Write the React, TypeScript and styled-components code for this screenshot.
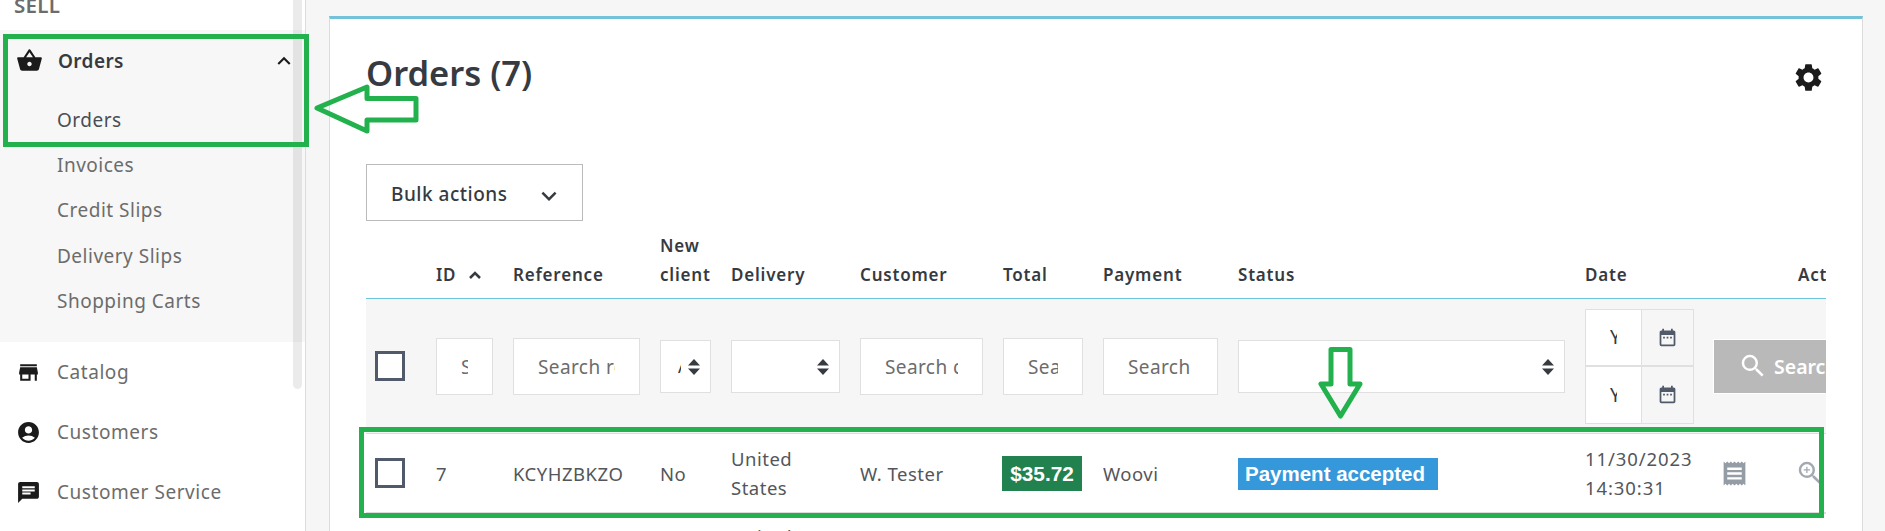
import React from "react";
import styled, { createGlobalStyle } from "styled-components";
import {
  MdAccountCircle,
  MdChat,
  MdDateRange,
  MdExpandLess,
  MdExpandMore,
  MdReceipt,
  MdSearch,
  MdSettings,
  MdShoppingBasket,
  MdStore,
  MdZoomIn,
} from "react-icons/md";

const Global = createGlobalStyle`
  html, body { margin: 0; padding: 0; height: 531px; overflow: hidden; background: #f6f6f6; }
  body { font-family: "Noto Sans", "Liberation Sans", sans-serif; color: #363a41; }
  * { box-sizing: border-box; }
`;

const Page = styled.div`
  position: relative;
  display: flex;
  width: 1885px;
  height: 531px;
  overflow: hidden;
`;

const Sidebar = styled.nav`
  position: relative;
  flex: 0 0 306px;
  height: 531px;
  background: #fff;
  border-right: 1px solid #dcdcdc;
  overflow: hidden;
`;

const ScrollThumb = styled.div`
  position: absolute;
  top: 0;
  left: 293px;
  width: 9px;
  height: 389px;
  border-radius: 0 0 5px 5px;
  background: rgba(0, 0, 0, 0.08);
`;

const SectionTitle = styled.div`
  height: 30px;
  margin-top: -6px;
  margin-bottom: 6px;
  padding-left: 14px;
  line-height: 22px;
  font-size: 20.5px;
  font-weight: 600;
  letter-spacing: 0.3px;
  color: #6c6c6c;
`;

const ActiveGroup = styled.div`
  background: #f7f7f7;
  padding-bottom: 18px;
`;

const GroupHeader = styled.div`
  display: flex;
  align-items: center;
  height: 67.5px;
  padding: 0 8px 6px 16px;
  font-size: 19px;
  font-weight: 600;
  letter-spacing: 0.4px;
  color: #363a41;
  svg:first-child { color: #1b1b1b; margin-right: 15px; }
  svg:last-child { margin-left: auto; color: #1b1b1b; }
`;

const SubItem = styled.div<{ $dark?: boolean }>`
  height: 45.4px;
  line-height: 45.4px;
  padding-left: 57px;
  font-size: 19px;
  letter-spacing: 0.5px;
  color: ${(p) => (p.$dark ? "#4a4d52" : "#6c6c6c")};
`;

const MainItem = styled.div`
  display: flex;
  align-items: center;
  height: 60px;
  padding-left: 16px;
  font-size: 19px;
  letter-spacing: 0.55px;
  color: #6c6c6c;
  svg { color: #1b1b1b; margin-right: 16px; flex: none; }
`;

const Main = styled.main`
  flex: 1;
  padding: 16px 22px 0 23px;
`;

const Card = styled.section`
  background: #fff;
  border-top: 3px solid #73c2d9;
  border-left: 1px solid #dcdcdc;
  border-right: 1px solid #dcdcdc;
  padding: 34px 35px 0 36px;
  height: 600px;
`;

const TitleRow = styled.div`
  display: flex;
  align-items: center;
  justify-content: space-between;
  height: 40px;
  margin-bottom: 71px;
  svg { color: #1b1b1b; margin: 9px 2px 0 0; }
`;

const Title = styled.h1`
  margin: 0;
  font-size: 34.5px;
  line-height: 40px;
  font-weight: 600;
  color: #363a41;
`;

const BulkButton = styled.button`
  display: flex;
  align-items: center;
  justify-content: space-between;
  width: 217px;
  height: 57px;
  padding: 2px 18px 0 24px;
  border: 1px solid #bbbbbb;
  background: #fff;
  font: 500 19px "Noto Sans", sans-serif;
  letter-spacing: 0.5px;
  color: #363a41;
  svg { margin-top: 4px; }
`;

const TableClip = styled.div`
  width: 1460px;
  overflow: hidden;
`;

const Table = styled.table`
  table-layout: fixed;
  width: 1547px;
  border-collapse: separate;
  border-spacing: 0;
  tbody tr:last-child td { height: 76px; }
`;

const Th = styled.th`
  height: 78px;
  padding: 0 0 9.5px 10px;
  vertical-align: bottom;
  text-align: left;
  border-bottom: 1px solid #6ec6dc;
  font-size: 17px;
  line-height: 29px;
  font-weight: 600;
  letter-spacing: 0.8px;
  color: #363a41;
  white-space: nowrap;
`;

const ActionsTh = styled(Th)`
  padding-left: 95px;
`;

const SortArrow = styled.svg`
  margin-left: 13px;
  vertical-align: 2px;
`;

const FilterCell = styled.td`
  height: 134px;
  padding: 0 10px;
  background: #f6f6f6;
  vertical-align: middle;
  white-space: nowrap;
`;

const SelectCell = styled(FilterCell)`
  padding-left: 9px;
`;

const SearchInput = styled.input`
  display: block;
  width: 100%;
  height: 57px;
  padding: 1px 24px 0;
  border: 1px solid #e0e0e0;
  background: #fff;
  font: 400 19px "Noto Sans", sans-serif;
  letter-spacing: 0.4px;
  outline: none;
  &::placeholder { color: #6c6c6c; opacity: 1; }
`;

const SelectWrap = styled.div`
  position: relative;
  height: 53px;
  svg { position: absolute; top: 19px; right: 11px; pointer-events: none; }
`;

const Select = styled.select`
  display: block;
  width: 100%;
  height: 100%;
  appearance: none;
  padding: 0 29px 0 17px;
  border: 1px solid #e0e0e0;
  border-radius: 0;
  background: #fff;
  font: 400 19px "Noto Sans", sans-serif;
  color: #363a41;
  outline: none;
`;

const Box = styled.span`
  display: block;
  width: 30px;
  height: 30px;
  border: 3px solid #505a6b;
  background: #fff;
`;

const DateGroup = styled.div`
  display: grid;
  grid-template-columns: 57px 52px;
  grid-auto-rows: 57.5px;
  width: 109px;
`;

const DateInput = styled.input`
  min-width: 0;
  width: 100%;
  height: 100%;
  padding: 0 24px;
  border: 1px solid #e0e0e0;
  background: #fff;
  font: 400 19px "Noto Sans", sans-serif;
  outline: none;
  &::placeholder { color: #363a41; opacity: 1; }
`;

const DateAddon = styled.div`
  display: flex;
  align-items: center;
  justify-content: center;
  border: 1px solid #e0e0e0;
  border-left: 0;
  background: #f6f6f6;
  color: #505a6b;
`;

const SearchButton = styled.button`
  display: flex;
  align-items: center;
  gap: 6px;
  width: 140px;
  height: 55px;
  padding: 0 0 0 24px;
  border: 1px solid #fff;
  background: #b9b9b9;
  color: #fff;
  font: 600 19.5px "Noto Sans", sans-serif;
`;

const Td = styled.td`
  height: 80px;
  padding: 0 0 0 10px;
  border-top: 1px solid #dcdcdc;
  border-bottom: 1px solid #dcdcdc;
  background: #fff;
  vertical-align: middle;
  font-size: 18.5px;
  letter-spacing: 0.5px;
  line-height: 29px;
  color: #53565b;
`;

const CheckTd = styled(Td)`
  padding-left: 9px;
`;

const DateTd = styled(Td)`
  letter-spacing: 0.9px;
`;

const TotalBadge = styled.span`
  display: inline-block;
  width: 80px;
  height: 35px;
  margin-left: -1px;
  text-align: center;
  background: #22824f;
  color: #fff;
  letter-spacing: 0;
  font: 700 20.8px/35px "Liberation Sans", Arial, sans-serif;
  vertical-align: middle;
`;

const StatusBadge = styled.span`
  display: inline-block;
  height: 32px;
  padding: 0 13px 0 7px;
  background: #3498db;
  color: #fff;
  letter-spacing: 0;
  font: 700 20.5px/32px "Liberation Sans", Arial, sans-serif;
  vertical-align: middle;
`;

const ActionCell = styled.div`
  display: flex;
  align-items: center;
  gap: 46px;
  padding-left: 7px;
  color: #949ca6;
  svg:last-child { color: #a2a9b2; }
`;

const GreenBox = styled.div<{ $x: number; $y: number; $w: number; $h: number }>`
  position: absolute;
  left: ${(p) => p.$x}px;
  top: ${(p) => p.$y}px;
  width: ${(p) => p.$w}px;
  height: ${(p) => p.$h}px;
  border: 5px solid #22b14c;
  pointer-events: none;
`;

const Overlay = styled.svg`
  position: absolute;
  inset: 0;
  pointer-events: none;
`;

const Updown = () => (
  <svg width="12" height="16" viewBox="0 0 12 16">
    <path d="M6 0 12 6.5H0zM6 16 0 9.500h12z" fill="#363a41" />
  </svg>
);

const rows = [
  { id: "7", ref: "KCYHZBKZO", customer: "W. Tester" },
  { id: "6", ref: "FFATNOMMJ", customer: "W. Tester" },
];

const columnWidths = [60, 77, 147, 71, 129, 143, 100, 135, 347, 128, 210];

export default function App() {
  return (
    <Page>
      <Global />
      <Sidebar>
        <SectionTitle>SELL</SectionTitle>
        <ActiveGroup>
          <GroupHeader>
            <MdShoppingBasket size={27} />
            Orders
            <MdExpandLess size={26} />
          </GroupHeader>
          <SubItem $dark>Orders</SubItem>
          <SubItem>Invoices</SubItem>
          <SubItem>Credit Slips</SubItem>
          <SubItem>Delivery Slips</SubItem>
          <SubItem>Shopping Carts</SubItem>
        </ActiveGroup>
        <MainItem><MdStore size={25} />Catalog</MainItem>
        <MainItem><MdAccountCircle size={25} />Customers</MainItem>
        <MainItem><MdChat size={25} />Customer Service</MainItem>
        <ScrollThumb />
      </Sidebar>
      <Main>
        <Card>
          <TitleRow>
            <Title>Orders (7)</Title>
            <MdSettings size={33} />
          </TitleRow>
          <BulkButton>
            Bulk actions
            <MdExpandMore size={30} />
          </BulkButton>
          <TableClip>
            <Table>
              <colgroup>
                {columnWidths.map((w, i) => (
                  <col key={i} style={{ width: w }} />
                ))}
              </colgroup>
              <thead>
                <tr>
                  <Th />
                  <Th>
                    ID
                    <SortArrow width="12" height="8" viewBox="0 0 12 8">
                      <path d="M1 7 6 2l5 5" fill="none" stroke="#363a41" strokeWidth="2.600" />
                    </SortArrow>
                  </Th>
                  <Th>Reference</Th>
                  <Th>New<br />client</Th>
                  <Th>Delivery</Th>
                  <Th>Customer</Th>
                  <Th>Total</Th>
                  <Th>Payment</Th>
                  <Th>Status</Th>
                  <Th>Date</Th>
                  <ActionsTh>Actions</ActionsTh>
                </tr>
              </thead>
              <tbody>
                <tr>
                  <SelectCell><Box /></SelectCell>
                  <FilterCell><SearchInput placeholder="Search ID" /></FilterCell>
                  <FilterCell><SearchInput placeholder="Search reference" /></FilterCell>
                  <FilterCell>
                    <SelectWrap>
                      <Select defaultValue="All"><option>All</option></Select>
                      <Updown />
                    </SelectWrap>
                  </FilterCell>
                  <FilterCell>
                    <SelectWrap>
                      <Select><option></option></Select>
                      <Updown />
                    </SelectWrap>
                  </FilterCell>
                  <FilterCell><SearchInput placeholder="Search customer" /></FilterCell>
                  <FilterCell><SearchInput placeholder="Search total" /></FilterCell>
                  <FilterCell><SearchInput placeholder="Search" /></FilterCell>
                  <FilterCell>
                    <SelectWrap>
                      <Select><option></option></Select>
                      <Updown />
                    </SelectWrap>
                  </FilterCell>
                  <FilterCell>
                    <DateGroup>
                      <DateInput placeholder="YYYY" />
                      <DateAddon><MdDateRange size={21} /></DateAddon>
                      <DateInput placeholder="YYYY" />
                      <DateAddon><MdDateRange size={21} /></DateAddon>
                    </DateGroup>
                  </FilterCell>
                  <FilterCell>
                    <SearchButton><MdSearch size={30} />Search</SearchButton>
                  </FilterCell>
                </tr>
                {rows.map((r) => (
                  <tr key={r.id}>
                    <CheckTd><Box /></CheckTd>
                    <Td>{r.id}</Td>
                    <Td>{r.ref}</Td>
                    <Td>No</Td>
                    <Td>United<br />States</Td>
                    <Td>{r.customer}</Td>
                    <Td><TotalBadge>$35.72</TotalBadge></Td>
                    <Td>Woovi</Td>
                    <Td><StatusBadge>Payment accepted</StatusBadge></Td>
                    <DateTd>11/30/2023<br />14:30:31</DateTd>
                    <Td>
                      <ActionCell>
                        <MdReceipt size={29} />
                        <MdZoomIn size={30} />
                      </ActionCell>
                    </Td>
                  </tr>
                ))}
              </tbody>
            </Table>
          </TableClip>
        </Card>
      </Main>
      <GreenBox $x={3} $y={34} $w={306} $h={113} />
      <GreenBox $x={359} $y={427} $w={1465} $h={91} />
      <Overlay width="1885" height="531" viewBox="0 0 1885 531">
        <path d="M317 108 367 87V98.500H416V120H367V131z" fill="none" stroke="#22b14c" strokeWidth="5" strokeLinejoin="round" />
        <path d="M1331 349.500H1350V384H1360L1340.500 416 1321 384H1331z" fill="none" stroke="#22b14c" strokeWidth="5" strokeLinejoin="round" />
      </Overlay>
    </Page>
  );
}
